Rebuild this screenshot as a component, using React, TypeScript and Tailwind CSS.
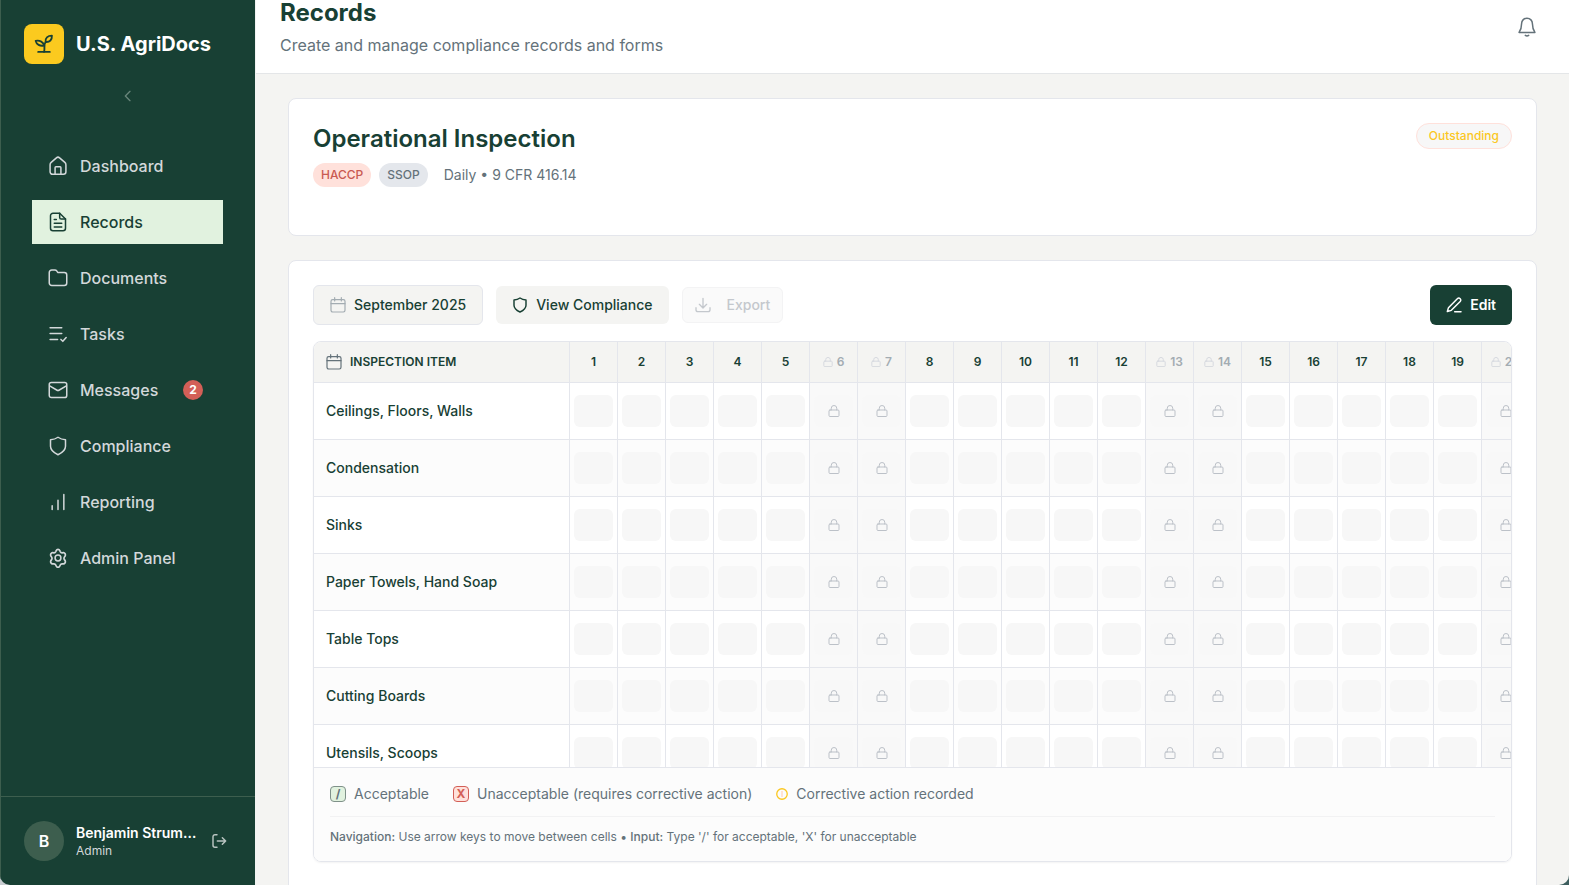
import React from "react";

type IconProps = { className?: string; strokeWidth?: number; children?: React.ReactNode };

function Svg({ className = "size-5", strokeWidth = 1.8, children }: IconProps) {
  return (
    <svg
      viewBox="0 0 24 24"
      fill="none"
      stroke="currentColor"
      strokeWidth={strokeWidth}
      strokeLinecap="round"
      strokeLinejoin="round"
      className={`${className} shrink-0`}
      aria-hidden="true"
    >
      {children}
    </svg>
  );
}

const SproutIcon = (p: IconProps) => (
  <Svg {...p}>
    <path d="M5 21.500h14" />
    <path d="M12 21.500c.7-1.500.6-3 .5-5.500-.1-3 .2-5 1.500-6.500" />
    <path d="M12 13.800C11.600 9.800 7 7.200 2 8.200c.8 4.200 5.200 6.800 10 5.600z" />
    <path d="M14 9.500c-1-4.500 2.500-7.500 7.500-7.500.3 5-2.700 8-7.500 7.500z" />
  </Svg>
);
const HomeIcon = (p: IconProps) => (
  <Svg {...p}>
    <path d="M2.500 10.500c0-1.100.5-2.100 1.300-2.800l6.300-5.500a2.900 2.900 0 0 1 3.800 0l6.300 5.500c.8.700 1.300 1.700 1.300 2.800V19a3 3 0 0 1-3 3h-13a3 3 0 0 1-3-3z" />
    <path d="M8.500 22v-8a1 1 0 0 1 1-1h5a1 1 0 0 1 1 1v8" />
  </Svg>
);
const RecordIcon = (p: IconProps) => (
  <Svg {...p}>
    <path d="M14 1.500H6a3 3 0 0 0-3 3v15a3 3 0 0 0 3 3h12a3 3 0 0 0 3-3v-11z" />
    <path d="M14 1.500v5a2 2 0 0 0 2 2h5" />
    <path d="M7.500 9H10M7.500 13.500h9M7.500 18h9" />
  </Svg>
);
const FolderIcon = (p: IconProps) => (
  <Svg {...p}>
    <path d="M1.500 5.500a3 3 0 0 1 3-3h3.700c1 0 1.900.5 2.500 1.300l.6.900c.4.500.9.800 1.500.8h6.700a3 3 0 0 1 3 3v9.500a3 3 0 0 1-3 3h-15a3 3 0 0 1-3-3z" />
  </Svg>
);
const TasksIcon = (p: IconProps) => (
  <Svg {...p}>
    <path d="M2.500 4.500h14M2.500 11.500h14M2.500 18.500h9" />
    <path d="m15.500 18.500 2.300 2.300 4-4.500" />
  </Svg>
);
const MailIcon = (p: IconProps) => (
  <Svg {...p}>
    <rect x="1.500" y="3" width="21" height="18" rx="2.500" />
    <path d="m2 7 8.400 5a3 3 0 0 0 3.200 0L22 7" />
  </Svg>
);
const ShieldIcon = (p: IconProps) => (
  <Svg {...p}>
    <path d="M12 1.500c2.600 1.900 5.600 2.800 9 3v7.800c0 4.700-3.600 7.700-9 10.200-5.400-2.500-9-5.500-9-10.200V4.500c3.400-.2 6.400-1.100 9-3z" />
  </Svg>
);
const BarsIcon = (p: IconProps) => (
  <Svg {...p}>
    <path d="M5 21v-4.500M12 21V10M19 21V3" />
  </Svg>
);
const GearIcon = (p: IconProps) => (
  <Svg {...p}>
    <path
      d="M10 3.200a2.200 2.200 0 0 1 4 0l.4.900a2.200 2.200 0 0 0 2.200 1.200l1-.1a2.200 2.200 0 0 1 2 3.500l-.6.800a2.200 2.200 0 0 0 0 2.600l.6.800a2.200 2.200 0 0 1-2 3.500l-1-.1a2.200 2.200 0 0 0-2.200 1.300l-.4.900a2.200 2.200 0 0 1-4 0l-.4-.9a2.200 2.200 0 0 0-2.200-1.300l-1 .1a2.200 2.200 0 0 1-2-3.500l.6-.8a2.200 2.200 0 0 0 0-2.600l-.6-.8a2.200 2.200 0 0 1 2-3.500l1 .1a2.200 2.200 0 0 0 2.200-1.200z"
      transform="matrix(1.1 0 0 1.2 -1.200 -.6)"
    />
    <circle cx="12" cy="12" r="3.500" />
  </Svg>
);
const ChevronIcon = (p: IconProps) => (
  <Svg {...p}>
    <path d="m15 5-7 7 7 7" />
  </Svg>
);
const LogoutIcon = (p: IconProps) => (
  <Svg {...p}>
    <path d="M9 2.500H6a3 3 0 0 0-3 3v13a3 3 0 0 0 3 3h3" />
    <path d="M9.500 12H22M17 7l5 5-5 5" />
  </Svg>
);
const BellIcon = (p: IconProps) => (
  <Svg {...p}>
    <path d="M12 1.500c-4 0-6.500 3-6.500 6.500 0 6-1 7.500-3 10.500h19c-2-3-3-4.500-3-10.500 0-3.500-2.500-6.500-6.500-6.500z" />
    <path d="M10 22c1.200.8 2.800.8 4 0" />
  </Svg>
);
const CalendarIcon = (p: IconProps) => (
  <Svg {...p}>
    <rect x="1.500" y="4" width="21" height="18.500" rx="2.500" />
    <path d="M1.500 10h21M7 1v5M17 1v5" />
  </Svg>
);
const DownloadIcon = (p: IconProps) => (
  <Svg {...p}>
    <path d="M12 2v14M6.500 11l5.500 5.500 5.500-5.500" />
    <path d="M1.500 16v3a3 3 0 0 0 3 3h15a3 3 0 0 0 3-3v-3" />
  </Svg>
);
const PenIcon = (p: IconProps) => (
  <Svg {...p}>
    <path d="M17 2.500a3 3 0 0 1 4.300 4.300L8 20l-6 1.800L3.700 16z" />
    <path d="M13 22h9.500" />
  </Svg>
);
const LockIcon = (p: IconProps) => (
  <Svg {...p}>
    <rect x="2" y="10" width="20" height="13" rx="2" />
    <path d="M6.500 10V6.500a5.500 5.500 0 0 1 11 0V10" />
  </Svg>
);

const navItems = [
  { label: "Dashboard", Icon: HomeIcon },
  { label: "Records", Icon: RecordIcon, active: true },
  { label: "Documents", Icon: FolderIcon },
  { label: "Tasks", Icon: TasksIcon },
  { label: "Messages", Icon: MailIcon, count: 2 },
  { label: "Compliance", Icon: ShieldIcon },
  { label: "Reporting", Icon: BarsIcon },
  { label: "Admin Panel", Icon: GearIcon },
];

const items = [
  "Ceilings, Floors, Walls",
  "Condensation",
  "Sinks",
  "Paper Towels, Hand Soap",
  "Table Tops",
  "Cutting Boards",
  "Utensils, Scoops",
];

const days = Array.from({ length: 30 }, (_, i) => i + 1);
const isWeekend = (day: number) => day % 7 === 6 || day % 7 === 0;

function Sidebar() {
  return (
    <aside className="flex w-64 shrink-0 flex-col border-r border-l border-r-[#f1f3f2] border-l-[#3d5e4e] bg-[#184034] text-white">
      <div className="flex items-center gap-3 pt-6 pl-[23px]">
        <span className="flex size-10 items-center justify-center rounded-lg bg-[#fbca1f] text-[#184034]">
          <SproutIcon strokeWidth={2.2} />
        </span>
        <span className="text-xl font-bold">U.S. AgriDocs</span>
      </div>
      <button type="button" aria-label="Collapse sidebar" className="mt-6 flex h-4 justify-center text-[#68857a]">
        <ChevronIcon className="size-4" strokeWidth={2} />
      </button>
      <nav className="mt-10 flex flex-col gap-3 pr-8 pl-[31px]">
        {navItems.map(({ label, Icon, active, count }) => (
          <a
            key={label}
            href="#"
            className={`flex h-11 items-center gap-3 px-4 font-medium ${
              active ? "bg-[#e1f2df] text-[#184034]" : "text-[#d3d8da]"
            }`}
          >
            <Icon />
            <span>{label}</span>
            {count && (
              <span className="mr-1 ml-auto flex size-5 items-center justify-center rounded-full bg-[#d35f57] text-xs font-bold text-white">
                {count}
              </span>
            )}
          </a>
        ))}
      </nav>
      <div className="mt-auto flex items-center gap-3 border-t border-[#3d5e4e] py-6 pr-7 pl-[23px]">
        <span className="flex size-10 shrink-0 items-center justify-center rounded-full bg-[#3d5e4e] font-semibold">B</span>
        <div className="min-w-0 flex-1">
          <p className="truncate text-sm leading-5 font-semibold">Benjamin Strummer</p>
          <p className="text-xs text-[#d3d8da]">Admin</p>
        </div>
        <button type="button" aria-label="Sign out" className="text-[#b9c4c1]">
          <LogoutIcon className="size-4" strokeWidth={2.2} />
        </button>
      </div>
    </aside>
  );
}

function RecordHeader() {
  return (
    <section className="flex items-start justify-between rounded-lg border border-[#e4e6ec] bg-white px-6 pt-6 pb-12">
      <div>
        <h2 className="text-2xl font-semibold">Operational Inspection</h2>
        <div className="mt-2 flex items-center gap-2">
          <span className="rounded-full bg-[#ffe1db] px-2 py-1 text-xs font-medium text-[#c95a52]">HACCP</span>
          <span className="rounded-full bg-[#e4e7ec] px-2 py-1 text-xs font-medium text-[#64727a]">SSOP</span>
          <span className="ml-2 text-sm text-[#64727a]">Daily • 9 CFR 416.14</span>
        </div>
      </div>
      <span className="rounded-full border border-[#ffe1db] bg-[#f7f7f7] px-3 py-1 text-xs font-medium text-[#fbc71f]">
        Outstanding
      </span>
    </section>
  );
}

function Toolbar() {
  return (
    <div className="flex items-center gap-[13px]">
      <button type="button" className="flex h-10 items-center gap-2 rounded-md border border-[#e4e6ec] bg-[#f4f4f2] px-4 text-sm font-medium">
        <CalendarIcon className="size-4 text-[#a3acb2]" />
        September 2025
      </button>
      <button type="button" className="flex h-[38px] items-center gap-2 rounded-md bg-[#f4f4f2] px-4 text-sm font-medium">
        <ShieldIcon className="size-4" strokeWidth={2.2} />
        View Compliance
      </button>
      <button type="button" disabled className="flex h-9 items-center gap-4 rounded-md border border-[#f3f3f4] bg-[#fafafa] px-3 text-sm font-medium text-[#c4c8cd]">
        <DownloadIcon className="size-4" strokeWidth={2} />
        Export
      </button>
      <button type="button" className="ml-auto flex h-10 items-center gap-2 rounded-md bg-[#184034] px-4 text-sm font-semibold text-white">
        <PenIcon className="size-4" strokeWidth={2.2} />
        Edit
      </button>
    </div>
  );
}

function InspectionTable() {
  return (
    <div className="max-h-[425px] overflow-hidden">
      <table className="w-max table-fixed border-separate border-spacing-0">
        <thead>
          <tr className="h-[41px] bg-[#f4f4f2] text-xs">
            <th scope="col" className="w-64 border-r border-b border-[#e4e6ec] px-3 text-left font-semibold">
              <span className="flex items-center gap-2">
                <CalendarIcon className="size-4 text-[#64727a]" />
                INSPECTION ITEM
              </span>
            </th>
            {days.map((day) => (
              <th key={day} scope="col" className="w-12 border-r border-b border-[#e4e6ec] p-0 font-semibold">
                {isWeekend(day) ? (
                  <span className="flex items-center justify-center gap-1 text-[#a3acb2]">
                    <LockIcon className="size-2.5 text-[#d6d9df]" strokeWidth={2.4} />
                    {day}
                  </span>
                ) : (
                  day
                )}
              </th>
            ))}
          </tr>
        </thead>
        <tbody>
          {items.map((item) => (
            <tr key={item} className="h-[57px] even:bg-[#fcfcfc]">
              <th scope="row" className="border-r border-b border-[#e4e6ec] px-3 text-left text-sm font-medium">
                {item}
              </th>
              {days.map((day) => (
                <td key={day} className={`border-r border-b border-[#e4e6ec] px-1 py-0 ${isWeekend(day) ? "bg-[#f9f9f9]" : ""}`}>
                  <button
                    type="button"
                    disabled={isWeekend(day)}
                    aria-label={`${item}, day ${day}`}
                    className={`flex h-8 w-full items-center justify-center rounded-md text-[#bcc1c8] ${
                      isWeekend(day) ? "bg-[#f8f8f8]" : "bg-[#f7f7f7]"
                    }`}
                  >
                    {isWeekend(day) && <LockIcon className="size-3" strokeWidth={2} />}
                  </button>
                </td>
              ))}
            </tr>
          ))}
        </tbody>
      </table>
    </div>
  );
}

function Legend() {
  return (
    <div className="border-t border-[#e4e6ec] bg-[#fcfcfc] p-4 text-[#64727a]">
      <div className="flex items-center gap-6 text-sm">
        <span className="flex items-center gap-2">
          <span className="flex size-4 items-center justify-center rounded-sm border border-[#7f9189] bg-[#e1f2df] text-xs font-bold">/</span>
          Acceptable
        </span>
        <span className="flex items-center gap-2">
          <span className="flex size-4 items-center justify-center rounded-sm border border-[#d35f57] bg-[#ffe1db] text-xs font-bold text-[#d35f57]">X</span>
          Unacceptable (requires corrective action)
        </span>
        <span className="flex items-center gap-2">
          <svg viewBox="0 0 12 12" className="size-3 text-[#fbc71f]" fill="none" stroke="currentColor" aria-hidden="true">
            <circle cx="6" cy="6" r="5.250" strokeWidth="1.300" />
            <path d="M6 3v6" stroke="#ffdcc8" strokeWidth="1.600" />
          </svg>
          Corrective action recorded
        </span>
      </div>
      <p className="mt-3 border-t border-[#f2f2f3] pt-3 text-xs">
        <strong className="font-medium">Navigation:</strong> Use arrow keys to move between cells •{" "}
        <strong className="font-medium">Input:</strong> Type '/' for acceptable, 'X' for unacceptable
      </p>
    </div>
  );
}

export default function App() {
  return (
    <div className="h-screen bg-linear-to-r from-[#c9cdd1] to-[#3d5e5e] font-['Inter',sans-serif] text-[#184034]">
      <div className="flex h-full overflow-hidden rounded-b-[10px]">
        <Sidebar />
        <div className="flex min-w-0 flex-1 flex-col overflow-hidden bg-[#f4f4f2]">
          <header className="flex shrink-0 items-start justify-between border-b border-[#e4e6e8] bg-white pt-px pr-8 pb-4 pl-6">
            <div>
              <h1 className="text-2xl leading-6 font-bold">Records</h1>
              <p className="mt-2 text-[#64727a]">Create and manage compliance records and forms</p>
            </div>
            <button type="button" aria-label="Notifications" className="mt-4 text-[#64727a]">
              <BellIcon />
            </button>
          </header>
          <main className="flex flex-col gap-6 px-8 pt-6">
            <RecordHeader />
            <section className="rounded-lg border border-[#e4e6ec] bg-white px-6 pt-6 pb-12">
              <Toolbar />
              <div className="mt-4 overflow-hidden rounded-lg border border-[#e4e6ec] shadow-xs">
                <InspectionTable />
                <Legend />
              </div>
            </section>
          </main>
        </div>
      </div>
    </div>
  );
}
